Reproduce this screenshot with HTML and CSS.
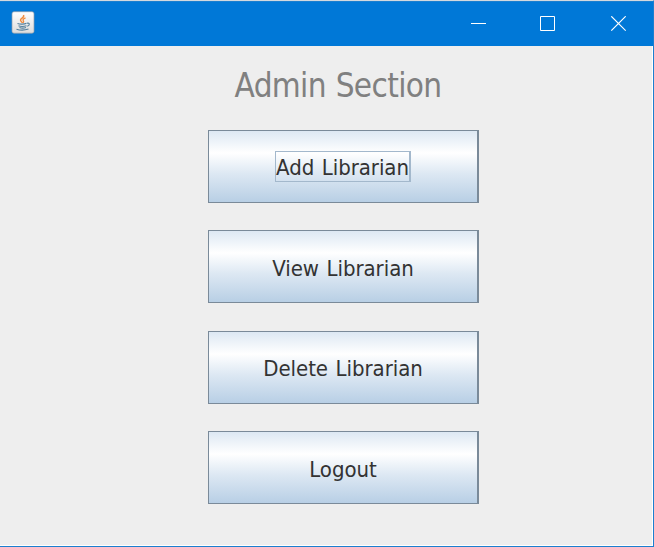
FILE: index.html
```html
<!DOCTYPE html>
<html lang="en">
<head>
<meta charset="utf-8">
<title>Admin Section</title>
<link rel="stylesheet" href="styles.css">
</head>
<body>
<div class="window">
  <header class="titlebar">
    <svg class="app-icon" width="24" height="24" viewBox="0 0 24 24">
      <defs><linearGradient id="tile" x1="0" y1="0" x2="0" y2="1"><stop offset="0" stop-color="#fff"/><stop offset="1" stop-color="#dcdcdc"/></linearGradient></defs>
      <rect x="1" y=".7" width="22" height="21.5" rx="2" fill="url(#tile)" stroke="#8f9caa" stroke-width=".7"/>
      <path d="M12.5 4c1.500 2.500-3 3.200-3 5 0 1.300 1.500 1.800 1.700 3M14.500 6.800c-2 .8-2.800 1.700-2.200 2.800.5.8.6 1.300-.3 2.300" fill="none" stroke="#f08a3c" stroke-width="1.400"/>
      <path d="M6.500 12.500c2.500 1 7 .8 9-.2M16 12.300c3-.8 3 2.200.2 3M7.500 14.700c2 .9 5.500.8 8 0M8.500 16.500c2 .8 4.500.7 6.500 0M5.500 18.200c3 1 8.500 1 12-.2" fill="none" stroke="#537f9c" stroke-width="1.100"/>
    </svg>
    <div class="controls">
      <svg width="16" height="16" viewBox="0 0 16 16"><path d="M1 7.500h15" stroke="#fff"/></svg>
      <svg width="16" height="16" viewBox="0 0 16 16"><path d="M.5.5h14v14H.5z" fill="none" stroke="#fff"/></svg>
      <svg width="16" height="16" viewBox="0 0 16 16"><path d="M1.300.3l14.400 14.400M15.700.3L1.300 14.700" stroke="#fff" stroke-width="1.200"/></svg>
    </div>
  </header>
  <main class="content">
    <h1 class="title">Admin Section</h1>
    <div class="menu">
      <button class="btn"><span class="label focused">Add Librarian</span></button>
      <button class="btn"><span class="label">View Librarian</span></button>
      <button class="btn"><span class="label">Delete Librarian</span></button>
      <button class="btn"><span class="label">Logout</span></button>
    </div>
  </main>
</div>
</body>
</html>
```
FILE: styles.css
```css
* { box-sizing: border-box; }
body { margin: 0; overflow: hidden; font-family: "DejaVu Sans Condensed", "DejaVu Sans", sans-serif; font-stretch: condensed; }
.window {
  width: 654px; height: 547px;
  display: flex; flex-direction: column;
  border-top: 1px solid #d3d9de;
  border-right: 1px solid #1c7fcf;
  border-bottom: 1px solid #1c7fcf;
  background: #eee;
}
.titlebar {
  height: 45px; flex: none;
  display: flex; justify-content: space-between;
  padding: 9px 27px 0 11px;
  background: #0078d7;
  border-top: 1px solid #1a7fd0;
}
.controls { display: flex; gap: 54px; padding-top: 5px; }
.controls svg { display: block; }
.content {
  flex: 1;
  display: flex; flex-direction: column; align-items: center;
  padding: 20px 0 0 35px;
  border-right: 1px solid #fff; border-bottom: 1px solid #fff;
}
.title {
  margin: 0; height: 64px; padding-right: 11px;
  font-size: 33px; font-weight: 400; line-height: 40px;
  letter-spacing: -0.65px; word-spacing: 1px; white-space: nowrap; color: #808080;
}
.menu { display: grid; grid-template-rows: 73px 73px 73px 73px; row-gap: 27.4px; }
.btn {
  width: 271px; padding: 0;
  display: flex; align-items: center; justify-content: center;
  border: 1px solid #7a8a99; border-right-width: 2px; border-radius: 0;
  background: linear-gradient(#dde8f3 0%, #fff 31%, #dde8f3 60%, #b8cfe5 100%);
  font: inherit; font-size: 22px; color: #333;
}
.label { height: 31px; line-height: 33px; white-space: nowrap; letter-spacing: -0.05px; word-spacing: 1.3px; }
.btn:nth-child(even) .label { line-height: 35px; }
.btn .focused {
  width: 136px; line-height: 31px;
  border: 1px solid #a3b8cc; border-right-width: 2px;
}
```
